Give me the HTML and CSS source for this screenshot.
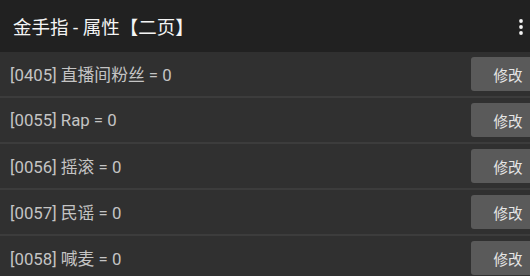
FILE: index.html
```html
<!DOCTYPE html>
<html lang="zh-CN">
<head>
<meta charset="utf-8">
<title>金手指 - 属性【二页】</title>
<link rel="stylesheet" href="styles.css">
</head>
<body>
<div class="app">
  <header class="toolbar">
    <h1 class="title">金手指 - 属性【二页】</h1>
    <svg class="menu" width="8" height="20" viewBox="0 0 8 20" aria-hidden="true">
      <circle cx="4" cy="4" r="1.9" fill="#f2f2f2"/>
      <circle cx="4" cy="10" r="1.9" fill="#f2f2f2"/>
      <circle cx="4" cy="16" r="1.9" fill="#f2f2f2"/>
    </svg>
  </header>
  <ul class="list">
    <li class="row"><span class="label">[0405] 直播间粉丝 = 0</span><button class="edit">修改</button></li>
    <li class="row"><span class="label">[0055] Rap = 0</span><button class="edit">修改</button></li>
    <li class="row"><span class="label">[0056] 摇滚 = 0</span><button class="edit">修改</button></li>
    <li class="row"><span class="label">[0057] 民谣 = 0</span><button class="edit">修改</button></li>
    <li class="row"><span class="label">[0058] 喊麦 = 0</span><button class="edit">修改</button></li>
  </ul>
</div>
</body>
</html>
```
FILE: styles.css
```css
html, body {
  margin: 0;
  padding: 0;
  background: #303030;
  overflow: hidden;
}
.app {
  width: 530px;
  height: 276px;
  overflow: hidden;
  font-family: Roboto, "Noto Sans CJK SC", sans-serif;
}
.toolbar {
  height: 52px;
  background: #212121;
  display: flex;
  align-items: center;
  justify-content: space-between;
  padding: 0 5px 0 13px;
  box-sizing: border-box;
}
.title {
  margin: 0;
  font-size: 18.5px;
  font-weight: 400;
  color: #f4f4f4;
  letter-spacing: 0;
}
.menu {
  display: block;
  margin-top: 1px;
}
.list {
  list-style: none;
  margin: 0;
  padding: 0;
}
.row {
  height: 44px;
  display: flex;
  align-items: center;
  justify-content: space-between;
  background: #303030;
  border-bottom: 2px solid #3c3c3c;
  padding-left: 10px;
}
.label {
  font-size: 16.8px;
  color: #c4c4c4;
}
.edit {
  flex: none;
  width: 74px;
  height: 34px;
  margin-right: -15px;
  border: none;
  border-radius: 3px;
  background: #5a5a5a;
  color: #e6e6e6;
  font-family: Roboto, "Noto Sans CJK SC", sans-serif;
  font-size: 14.5px;
  padding: 0;
}
```
